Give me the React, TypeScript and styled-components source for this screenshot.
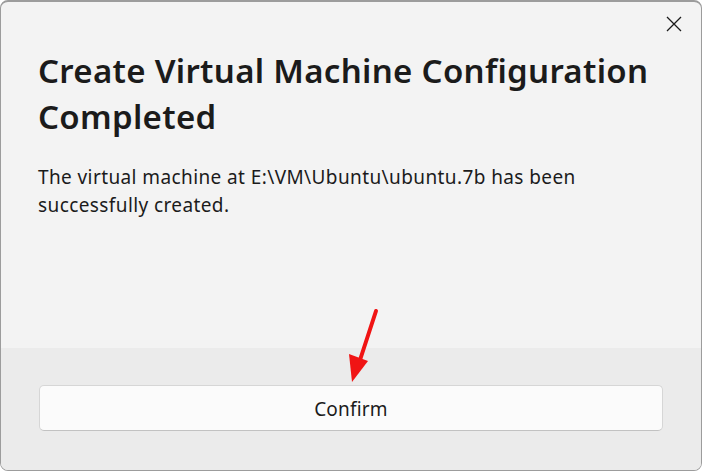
import React from 'react'
import styled, { createGlobalStyle } from 'styled-components'

const GlobalStyle = createGlobalStyle`
  html, body {
    margin: 0;
    padding: 0;
    background: #ffffff;
  }
  * {
    box-sizing: border-box;
  }
`

const Window = styled.div`
  position: relative;
  width: 702px;
  height: 471px;
  display: flex;
  flex-direction: column;
  border: 1px solid #9c9c9c;
  border-top-width: 2px;
  border-radius: 8px;
  overflow: hidden;
  background: #f3f3f3;
  font-family: 'Noto Sans', 'Open Sans', sans-serif;
  color: #1b1b1b;
`

const Body = styled.div`
  flex: 1;
  padding: 46px 30px 0 37px;
`

const Title = styled.h1`
  margin: 0;
  font-size: 33px;
  line-height: 46px;
  font-weight: 600;
  letter-spacing: 0.3px;
`

const Message = styled.p`
  margin: 23px 0 0;
  font-size: 19px;
  line-height: 28px;
  font-weight: 400;
  letter-spacing: 0.4px;
`

const Footer = styled.div`
  height: 122px;
  background: #ebebeb;
  padding: 37px 38px 0 38px;
`

const Button = styled.button`
  width: 100%;
  height: 46px;
  border: 1px solid #d6d6d6;
  border-bottom-color: #c2c2c2;
  border-radius: 5px;
  background: #fbfbfb;
  font-family: inherit;
  font-size: 19px;
  letter-spacing: 0.2px;
  color: #1b1b1b;
  padding: 2px 0 0;
`

const CloseButton = styled.button`
  position: absolute;
  top: 13px;
  right: 18px;
  width: 18px;
  height: 18px;
  border: none;
  background: transparent;
  padding: 0;
  display: flex;
  align-items: center;
  justify-content: center;
`

const Arrow = styled.svg`
  position: absolute;
  left: 340px;
  top: 302px;
  pointer-events: none;
`

const App: React.FC = () => {
  return (
    <>
      <GlobalStyle />
      <Window>
        <CloseButton aria-label="Close">
          <svg width="16" height="16" viewBox="0 0 16 16">
            <path d="M1 1 L15 15 M15 1 L1 15" stroke="#1b1b1b" strokeWidth="1.3" />
          </svg>
        </CloseButton>
        <Body>
          <Title>
            Create Virtual Machine Configuration
            <br />
            Completed
          </Title>
          <Message>
            The virtual machine at E:\VM\Ubuntu\ubuntu.7b has been
            <br />
            successfully created.
          </Message>
        </Body>
        <Footer>
          <Button>Confirm</Button>
        </Footer>
        <Arrow width="50" height="85" viewBox="0 0 50 85">
          <path d="M35 7 L19 56" stroke="#f01414" strokeWidth="4" strokeLinecap="round" />
          <polygon points="11,78 8,50 27,57" fill="#f01414" />
        </Arrow>
      </Window>
    </>
  )
}

export default App
